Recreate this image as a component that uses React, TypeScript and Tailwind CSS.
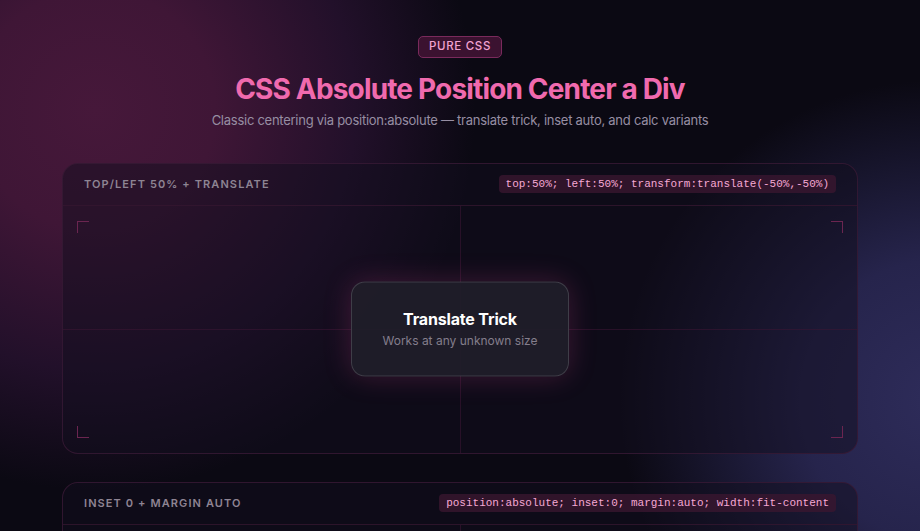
const corner = "absolute w-3 h-3 border-[#6b2550]";

function Demo({
  label,
  code,
  title,
  note,
}: {
  label: string;
  code: string;
  title?: string;
  note?: string;
}) {
  return (
    <section className="rounded-2xl border border-[#3a1a36]/80 bg-[#120e1e]/50 overflow-hidden">
      <header className="flex items-center justify-between h-[42px] px-[21px] border-b border-[#35172f]/80">
        <span className="text-[11px] font-semibold tracking-[0.1em] text-[#8e8493]">{label}</span>
        <code className="rounded-[4px] bg-[#3a1630]/80 px-[7px] py-[2px] font-['Liberation_Mono',monospace] text-[11px] leading-[14px] text-[#f5a8d4]">
          {code}
        </code>
      </header>
      <div className="relative h-[247px]">
        {/* crosshair */}
        <div className="absolute left-1/2 top-0 bottom-0 w-px bg-[#3a1533]/60" />
        <div className="absolute top-1/2 left-0 right-0 h-px bg-[#3a1533]/60" />
        {/* corner marks */}
        <div className={`${corner} left-[14px] top-[15px] border-l border-t`} />
        <div className={`${corner} right-[14px] top-[15px] border-r border-t`} />
        <div className={`${corner} left-[14px] bottom-[15px] border-l border-b`} />
        <div className={`${corner} right-[14px] bottom-[15px] border-r border-b`} />
        {/* centered box */}
        <div className="absolute left-1/2 top-1/2 -translate-x-1/2 -translate-y-1/2 w-[218px] h-[95px] rounded-[14px] border border-white/15 bg-[#201d29]/95 shadow-[0_0_28px_rgba(236,72,153,0.22)] flex flex-col items-center justify-center">
          {title && <div className="text-[16px] font-bold tracking-[-0.01em] text-white leading-5">{title}</div>}
          {note && <div className="mt-[3px] text-[12px] text-[#847e8c]">{note}</div>}
        </div>
      </div>
    </section>
  );
}

export default function App() {
  return (
    <div className="min-h-screen overflow-hidden bg-[#0b0913] bg-[radial-gradient(circle_at_95px_110px,#46183a_0px,#3f1636_120px,#22102a_260px,rgba(11,9,19,0)_380px),radial-gradient(circle_at_940px_400px,#2e2c5a_0px,#26244c_140px,rgba(11,9,19,0)_320px)] font-['Inter',sans-serif]">
      <div className="flex flex-col items-center pt-9">
        <span className="rounded-[5px] border border-[#7a2a5c] bg-[#3b1230] px-[10px] h-[22px] flex items-center text-[11.5px] font-medium tracking-[0.06em] text-[#f2a3d0]">
          PURE CSS
        </span>
        <h1 className="mt-[13px] text-[28px] leading-9 font-bold tracking-[-0.03em] text-[#f06aae]">
          CSS Absolute Position Center a Div
        </h1>
        <p className="mt-[4px] text-[13px] tracking-[-0.02em] text-[#978ea3]">
          Classic centering via position:absolute — translate trick, inset auto, and calc variants
        </p>
      </div>
      <div className="w-[796px] mx-auto mt-[32px] flex flex-col gap-[28px] pb-10">
        <Demo
          label="TOP/LEFT 50% + TRANSLATE"
          code="top:50%; left:50%; transform:translate(-50%,-50%)"
          title="Translate Trick"
          note="Works at any unknown size"
        />
        <Demo
          label="INSET 0 + MARGIN AUTO"
          code="position:absolute; inset:0; margin:auto; width:fit-content"
        />
      </div>
    </div>
  );
}
